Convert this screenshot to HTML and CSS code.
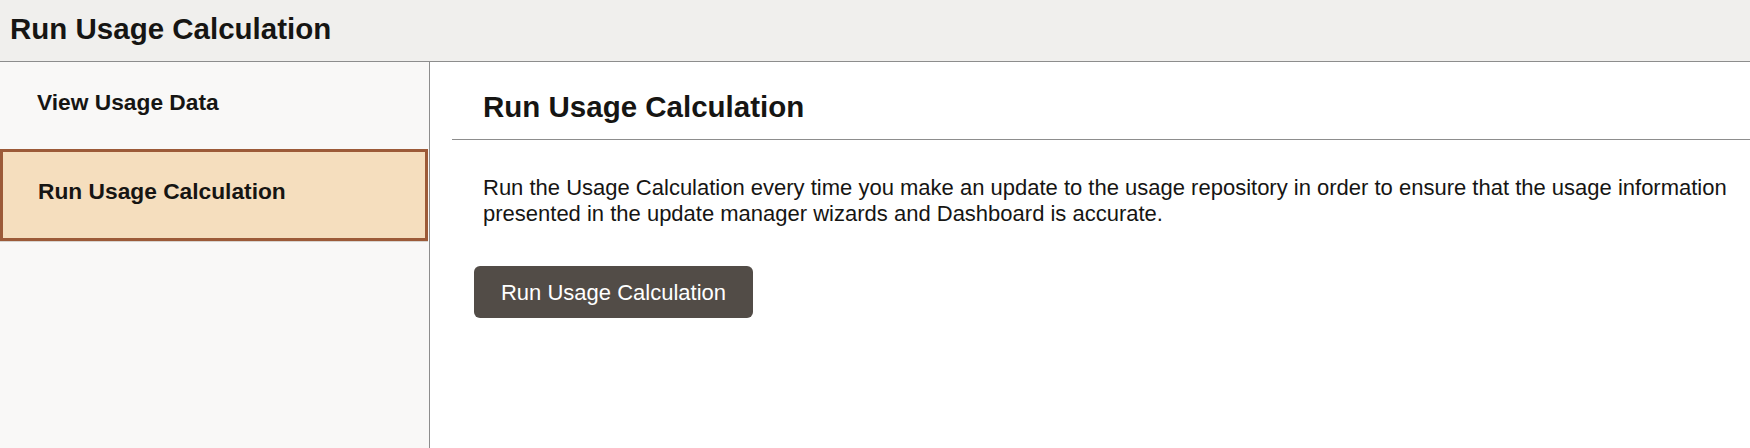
FILE: index.html
```html
<!DOCTYPE html>
<html lang="en">
<head>
<meta charset="utf-8">
<title>Run Usage Calculation</title>
<link rel="stylesheet" href="styles.css">
</head>
<body>
<header class="page-header">
  <h1 class="page-title">Run Usage Calculation</h1>
</header>
<div class="layout">
  <nav class="sidebar">
    <a class="nav-item">View Usage Data</a>
    <a class="nav-item nav-item-active">Run Usage Calculation</a>
  </nav>
  <main class="content">
    <h2 class="content-title">Run Usage Calculation</h2>
    <div class="divider"></div>
    <p class="description">Run the Usage Calculation every time you make an update to the usage repository in order to ensure that the usage information presented in the update manager wizards and Dashboard is accurate.</p>
    <div class="actions">
      <button class="primary-btn" type="button">Run Usage Calculation</button>
    </div>
  </main>
</div>
</body>
</html>
```
FILE: styles.css
```css
* { box-sizing: border-box; }

html, body {
  margin: 0;
  padding: 0;
  height: 100%;
}

body {
  font-family: "Liberation Sans", Arial, sans-serif;
  color: #161513;
  background: #ffffff;
  display: flex;
  flex-direction: column;
  overflow: hidden;
}

.page-header {
  height: 62px;
  background: #f0efed;
  border-bottom: 1px solid #8d8d8d;
  padding: 12px 0 0 10px;
  flex: none;
}

.page-title {
  margin: 0;
  font-size: 29.5px;
  line-height: 34px;
  font-weight: bold;
}

.layout {
  flex: 1;
  display: flex;
  min-height: 0;
}

.sidebar {
  width: 430px;
  flex: none;
  background: #f9f8f7;
  border-right: 1px solid #8d8d8d;
  display: flex;
  flex-direction: column;
}

.nav-item {
  display: block;
  font-size: 22.75px;
  line-height: 26px;
  font-weight: bold;
  color: #161513;
  text-decoration: none;
}

.nav-item:first-child {
  height: 87px;
  padding: 27px 0 0 37px;
}

.nav-item-active {
  height: 92px;
  margin-right: 1px;
  padding: 26px 0 0 35px;
  background: #f5debe;
  border: 3px solid #9c5a38;
  box-shadow: 0 1px 0 #d8d4cf;
}

.content {
  flex: 1;
  padding: 28px 0 0 22px;
  min-width: 0;
}

.content-title {
  margin: 0 0 15px 31px;
  font-size: 29.5px;
  line-height: 34px;
  font-weight: bold;
}

.divider {
  height: 1px;
  background: #8d8d8d;
}

.description {
  margin: 35px 20px 0 31px;
  font-size: 22px;
  line-height: 26px;
  color: #161513;
}

.actions {
  margin: 39px 0 0 22px;
}

.primary-btn {
  height: 52px;
  width: 279px;
  padding: 0;
  border: none;
  border-radius: 6px;
  background: #524c47;
  color: #ffffff;
  font-family: "Liberation Sans", Arial, sans-serif;
  font-size: 22px;
  line-height: 25px;
  cursor: pointer;
}
```
